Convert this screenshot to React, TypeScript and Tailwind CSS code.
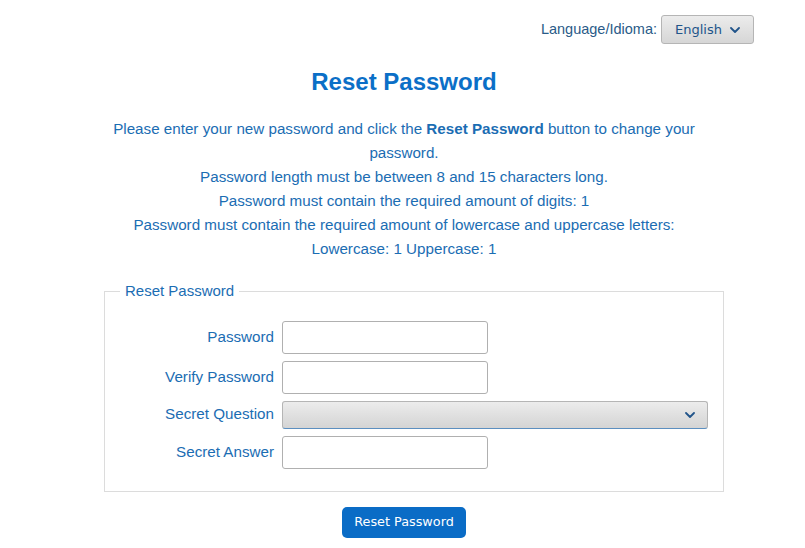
import React from "react";

function Chevron({ className }: { className?: string }) {
  return (
    <svg viewBox="0 0 10 6" className={className} fill="none">
      <path d="M1 1l4 4 4-4" stroke="currentColor" strokeWidth="1.8" strokeLinecap="round" strokeLinejoin="round" />
    </svg>
  );
}

function Row({ label, children }: { label: string; children: React.ReactNode }) {
  return (
    <div className="flex items-center gap-2">
      <label className="w-[169px] text-right text-[15.2px] text-[#1b6db3]">{label}</label>
      {children}
    </div>
  );
}

export default function App() {
  const sans = { fontFamily: '"Liberation Sans", Arial, sans-serif' };
  return (
    <div className="min-h-screen bg-white" style={sans}>
      {/* Language picker */}
      <div className="flex items-center justify-end gap-1 pt-[15px] pr-[51px]">
        <span className="text-[14.5px] text-[#2a5b88]">Language/Idioma:</span>
        <button className="flex h-[29px] w-[93px] items-center justify-center gap-2 rounded-[3px] border border-[#b5b5b5] bg-gradient-to-b from-[#ececec] to-[#d6d6d6] text-[13px] text-[#21548a] [font-family:'DejaVu_Sans',sans-serif]">
          English
          <Chevron className="h-[6px] w-[10px] text-[#21548a]" />
        </button>
      </div>

      <div className="flex flex-col items-center pl-[3px]">
        <h1 className="mt-[24px] text-[24px] leading-[28px] font-bold text-[#0b6fc7]">Reset Password</h1>
        <div className="mt-[21px] w-[600px] text-center text-[15.2px] leading-[24px] text-[#1b6db3]">
          <p>
            Please enter your new password and click the <b>Reset Password</b> button to change your password.
          </p>
          <p>Password length must be between 8 and 15 characters long.</p>
          <p>Password must contain the required amount of digits: 1</p>
          <p>Password must contain the required amount of lowercase and uppercase letters:</p>
          <p>Lowercase: 1 Uppercase: 1</p>
        </div>
      </div>

      <fieldset className="mt-[19px] ml-[104px] w-[620px] border border-[#dcdcdc] pt-[18px] pb-[22px]">
        <legend className="ml-[15px] px-[5px] text-[15px] text-[#1b6db3]">Reset Password</legend>
        <div className="flex flex-col gap-[7px]">
          <Row label="Password">
            <input type="password" className="h-[33px] w-[206px] rounded-[3px] border border-[#b0b0b0] bg-white" />
          </Row>
          <Row label="Verify Password">
            <input type="password" className="h-[33px] w-[206px] rounded-[3px] border border-[#b0b0b0] bg-white" />
          </Row>
          <Row label="Secret Question">
            <div className="flex h-[28px] w-[426px] items-center justify-end rounded-[3px] border border-[#b5b5b5] border-b-[#5c8fc0] bg-gradient-to-b from-[#ececec] to-[#d4d4d4] pr-[12px]">
              <Chevron className="h-[6px] w-[10px] text-[#21548a]" />
            </div>
          </Row>
          <Row label="Secret Answer">
            <input type="text" className="h-[33px] w-[206px] rounded-[3px] border border-[#b0b0b0] bg-white" />
          </Row>
        </div>
      </fieldset>

      <div className="flex justify-center pl-[3px]">
        <button className="mt-[15px] h-[31px] w-[124px] rounded-[5px] bg-[#0a6cc6] text-[12.8px] text-white [font-family:'DejaVu_Sans',sans-serif]">
          Reset Password
        </button>
      </div>
    </div>
  );
}
